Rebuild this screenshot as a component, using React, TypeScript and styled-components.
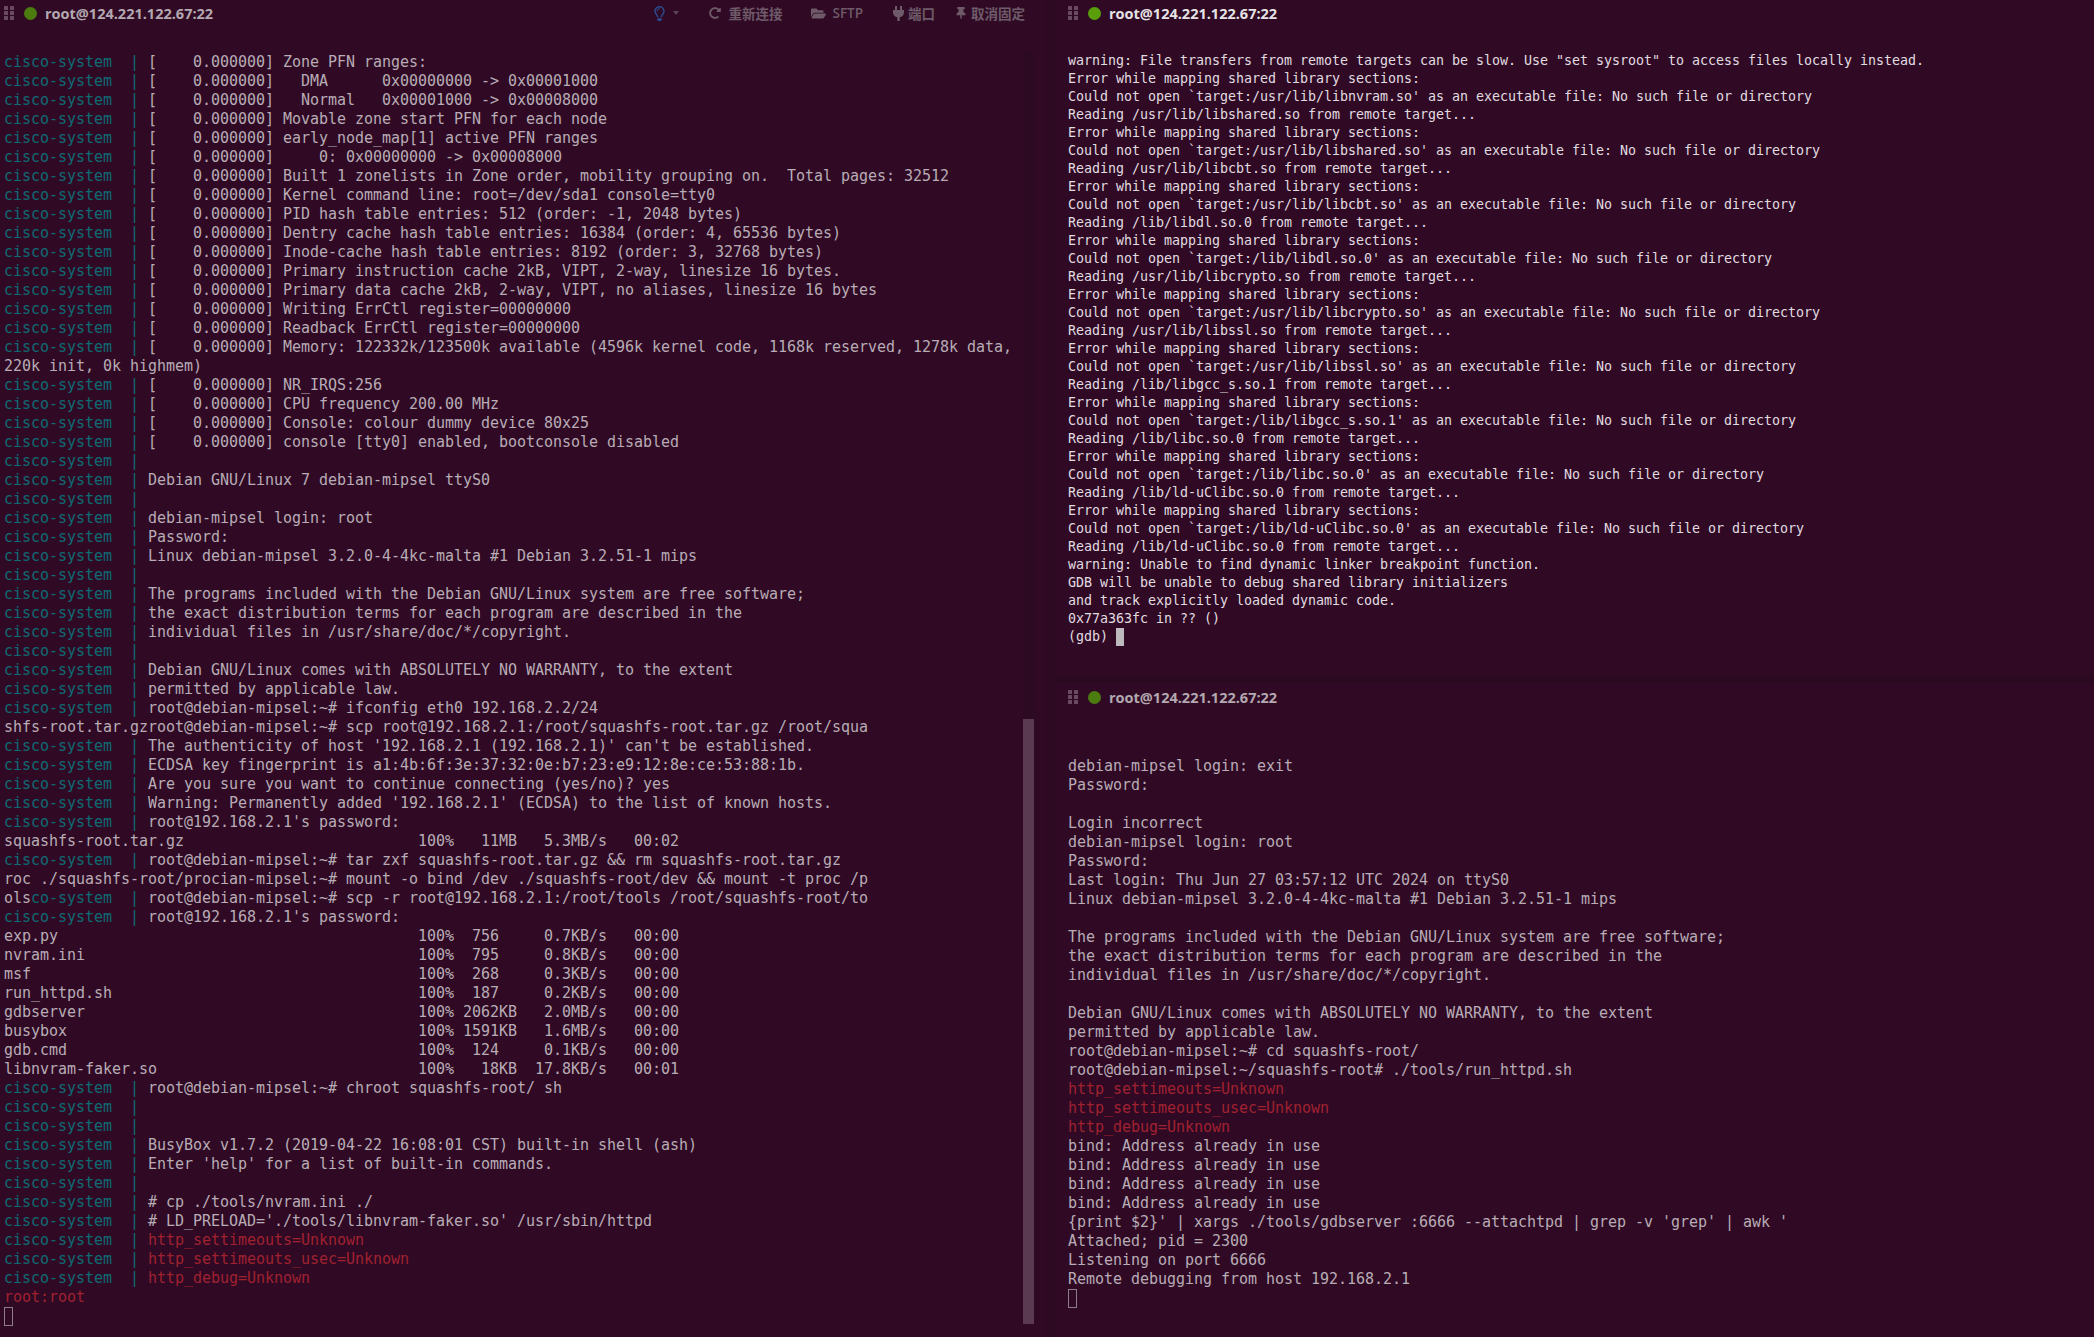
import React from "react";
import styled, { createGlobalStyle } from "styled-components";
import { FaRegLightbulb, FaRedoAlt, FaFolderOpen, FaThumbtack } from "react-icons/fa";

const Global = createGlobalStyle`
  html, body { margin: 0; padding: 0; height: 1337px; overflow: hidden; background: #300a24; }
  #root { width: 2094px; height: 1337px; overflow: hidden; }
`;

const Page = styled.div`
  display: flex;
  width: 2094px;
  height: 1337px;
  background: #300a24;
  overflow: hidden;
`;

const LeftPane = styled.section`
  position: relative;
  width: 1046px;
  height: 1337px;
  flex: none;
`;

const Gutter = styled.div`
  width: 10px;
  flex: none;
  background: #2d0a22;
`;

const RightColumn = styled.div`
  flex: 1;
  display: flex;
  flex-direction: column;
`;

const TopPane = styled.section`
  height: 673px;
  flex: none;
`;

const Seam = styled.div`
  height: 9px;
  flex: none;
  background: linear-gradient(#2e0a23, #2a0a1f);
`;

const BottomPane = styled.section`
  flex: 1;
`;

const Header = styled.header<{ $inset: number; $height: number }>`
  display: flex;
  align-items: center;
  height: ${(p) => p.$height}px;
  padding-left: ${(p) => p.$inset}px;
  padding-right: 21px;
`;

const Grip = styled.svg`
  width: 10px;
  height: 14px;
  flex: none;
  fill: #6a4a62;
`;

const Dot = styled.span<{ $active?: boolean }>`
  width: 13px;
  height: 13px;
  margin-left: 10px;
  border-radius: 50%;
  flex: none;
  background: ${(p) => (p.$active ? "#5a9e0c" : "#4c7c10")};
`;

const Title = styled.span<{ $active?: boolean }>`
  margin-left: 8px;
  font: 700 14.5px "Open Sans", "Noto Sans", sans-serif;
  color: ${(p) => (p.$active ? "#e6e3e6" : "#b3a8b0")};
`;

const Tools = styled.div`
  margin-left: auto;
  display: flex;
  align-items: center;
  font: 600 13.5px "Open Sans", "Noto Sans CJK SC", sans-serif;
  color: #6e5a69;
`;

const Tool = styled.span<{ $before: number; $gap: number }>`
  display: inline-flex;
  align-items: center;
  gap: ${(p) => p.$gap}px;
  margin-left: ${(p) => p.$before}px;
  white-space: nowrap;
`;

const BulbIcon = styled(FaRegLightbulb)`
  width: 11px;
  height: 15px;
  color: #2c4a8e;
`;

const Caret = styled.span`
  width: 0;
  height: 0;
  margin-left: 8px;
  border-left: 3px solid transparent;
  border-right: 3px solid transparent;
  border-top: 4px solid #5a4355;
`;

const Terminal = styled.div<{ $top: number; $left: number; $size: number; $line: number; $track: number; $bright?: boolean }>`
  padding: ${(p) => p.$top}px 0 0 ${(p) => p.$left}px;
  font-family: "DejaVu Sans Mono", "Liberation Mono", monospace;
  font-size: ${(p) => p.$size}px;
  line-height: ${(p) => p.$line}px;
  letter-spacing: ${(p) => p.$track}px;
  color: ${(p) => (p.$bright ? "#e0dce0" : "#b8acb6")};
  white-space: pre;
`;

const Row = styled.div<{ $line: number }>`
  height: ${(p) => p.$line}px;
`;

const Prefix = styled.span`
  color: #0e6b74;
`;

const Red = styled.span`
  color: #a02130;
`;

const Block = styled.span`
  display: inline-block;
  width: 8px;
  height: 18px;
  vertical-align: top;
  background: #bdbabd;
`;

const Hollow = styled.span`
  display: block;
  width: 9px;
  height: 19px;
  box-sizing: border-box;
  border: 1px solid #8c7d88;
`;

const ScrollTrack = styled.div`
  position: absolute;
  left: 1023px;
  top: 52px;
  bottom: 13px;
  width: 11px;
  background: #2c0a21;
`;

const ScrollThumb = styled.div`
  position: absolute;
  left: 0;
  right: 0;
  top: 667px;
  bottom: 0;
  background: #593a51;
`;

const leftLines = [
  "~[    0.000000] Zone PFN ranges:",
  "~[    0.000000]   DMA      0x00000000 -> 0x00001000",
  "~[    0.000000]   Normal   0x00001000 -> 0x00008000",
  "~[    0.000000] Movable zone start PFN for each node",
  "~[    0.000000] early_node_map[1] active PFN ranges",
  "~[    0.000000]     0: 0x00000000 -> 0x00008000",
  "~[    0.000000] Built 1 zonelists in Zone order, mobility grouping on.  Total pages: 32512",
  "~[    0.000000] Kernel command line: root=/dev/sda1 console=tty0",
  "~[    0.000000] PID hash table entries: 512 (order: -1, 2048 bytes)",
  "~[    0.000000] Dentry cache hash table entries: 16384 (order: 4, 65536 bytes)",
  "~[    0.000000] Inode-cache hash table entries: 8192 (order: 3, 32768 bytes)",
  "~[    0.000000] Primary instruction cache 2kB, VIPT, 2-way, linesize 16 bytes.",
  "~[    0.000000] Primary data cache 2kB, 2-way, VIPT, no aliases, linesize 16 bytes",
  "~[    0.000000] Writing ErrCtl register=00000000",
  "~[    0.000000] Readback ErrCtl register=00000000",
  "~[    0.000000] Memory: 122332k/123500k available (4596k kernel code, 1168k reserved, 1278k data,",
  "220k init, 0k highmem)",
  "~[    0.000000] NR_IRQS:256",
  "~[    0.000000] CPU frequency 200.00 MHz",
  "~[    0.000000] Console: colour dummy device 80x25",
  "~[    0.000000] console [tty0] enabled, bootconsole disabled",
  "~",
  "~Debian GNU/Linux 7 debian-mipsel ttyS0",
  "~",
  "~debian-mipsel login: root",
  "~Password:",
  "~Linux debian-mipsel 3.2.0-4-4kc-malta #1 Debian 3.2.51-1 mips",
  "~",
  "~The programs included with the Debian GNU/Linux system are free software;",
  "~the exact distribution terms for each program are described in the",
  "~individual files in /usr/share/doc/*/copyright.",
  "~",
  "~Debian GNU/Linux comes with ABSOLUTELY NO WARRANTY, to the extent",
  "~permitted by applicable law.",
  "~root@debian-mipsel:~# ifconfig eth0 192.168.2.2/24",
  "shfs-root.tar.gzroot@debian-mipsel:~# scp root@192.168.2.1:/root/squashfs-root.tar.gz /root/squa",
  "~The authenticity of host '192.168.2.1 (192.168.2.1)' can't be established.",
  "~ECDSA key fingerprint is a1:4b:6f:3e:37:32:0e:b7:23:e9:12:8e:ce:53:88:1b.",
  "~Are you sure you want to continue connecting (yes/no)? yes",
  "~Warning: Permanently added '192.168.2.1' (ECDSA) to the list of known hosts.",
  "~root@192.168.2.1's password:",
  "squashfs-root.tar.gz                          100%   11MB   5.3MB/s   00:02",
  "~root@debian-mipsel:~# tar zxf squashfs-root.tar.gz && rm squashfs-root.tar.gz",
  "roc ./squashfs-root/procian-mipsel:~# mount -o bind /dev ./squashfs-root/dev && mount -t proc /p",
  "^root@debian-mipsel:~# scp -r root@192.168.2.1:/root/tools /root/squashfs-root/to",
  "~root@192.168.2.1's password:",
  "exp.py                                        100%  756     0.7KB/s   00:00",
  "nvram.ini                                     100%  795     0.8KB/s   00:00",
  "msf                                           100%  268     0.3KB/s   00:00",
  "run_httpd.sh                                  100%  187     0.2KB/s   00:00",
  "gdbserver                                     100% 2062KB   2.0MB/s   00:00",
  "busybox                                       100% 1591KB   1.6MB/s   00:00",
  "gdb.cmd                                       100%  124     0.1KB/s   00:00",
  "libnvram-faker.so                             100%   18KB  17.8KB/s   00:01",
  "~root@debian-mipsel:~# chroot squashfs-root/ sh",
  "~",
  "~",
  "~BusyBox v1.7.2 (2019-04-22 16:08:01 CST) built-in shell (ash)",
  "~Enter 'help' for a list of built-in commands.",
  "~",
  "~# cp ./tools/nvram.ini ./",
  "~# LD_PRELOAD='./tools/libnvram-faker.so' /usr/sbin/httpd",
  "~!http_settimeouts=Unknown",
  "~!http_settimeouts_usec=Unknown",
  "~!http_debug=Unknown",
  "!root:root",
];

const topLines = [
  'warning: File transfers from remote targets can be slow. Use "set sysroot" to access files locally instead.',
  "Error while mapping shared library sections:",
  "Could not open `target:/usr/lib/libnvram.so' as an executable file: No such file or directory",
  "Reading /usr/lib/libshared.so from remote target...",
  "Error while mapping shared library sections:",
  "Could not open `target:/usr/lib/libshared.so' as an executable file: No such file or directory",
  "Reading /usr/lib/libcbt.so from remote target...",
  "Error while mapping shared library sections:",
  "Could not open `target:/usr/lib/libcbt.so' as an executable file: No such file or directory",
  "Reading /lib/libdl.so.0 from remote target...",
  "Error while mapping shared library sections:",
  "Could not open `target:/lib/libdl.so.0' as an executable file: No such file or directory",
  "Reading /usr/lib/libcrypto.so from remote target...",
  "Error while mapping shared library sections:",
  "Could not open `target:/usr/lib/libcrypto.so' as an executable file: No such file or directory",
  "Reading /usr/lib/libssl.so from remote target...",
  "Error while mapping shared library sections:",
  "Could not open `target:/usr/lib/libssl.so' as an executable file: No such file or directory",
  "Reading /lib/libgcc_s.so.1 from remote target...",
  "Error while mapping shared library sections:",
  "Could not open `target:/lib/libgcc_s.so.1' as an executable file: No such file or directory",
  "Reading /lib/libc.so.0 from remote target...",
  "Error while mapping shared library sections:",
  "Could not open `target:/lib/libc.so.0' as an executable file: No such file or directory",
  "Reading /lib/ld-uClibc.so.0 from remote target...",
  "Error while mapping shared library sections:",
  "Could not open `target:/lib/ld-uClibc.so.0' as an executable file: No such file or directory",
  "Reading /lib/ld-uClibc.so.0 from remote target...",
  "warning: Unable to find dynamic linker breakpoint function.",
  "GDB will be unable to debug shared library initializers",
  "and track explicitly loaded dynamic code.",
  "0x77a363fc in ?? ()",
];

const bottomLines = [
  "debian-mipsel login: exit",
  "Password:",
  "",
  "Login incorrect",
  "debian-mipsel login: root",
  "Password:",
  "Last login: Thu Jun 27 03:57:12 UTC 2024 on ttyS0",
  "Linux debian-mipsel 3.2.0-4-4kc-malta #1 Debian 3.2.51-1 mips",
  "",
  "The programs included with the Debian GNU/Linux system are free software;",
  "the exact distribution terms for each program are described in the",
  "individual files in /usr/share/doc/*/copyright.",
  "",
  "Debian GNU/Linux comes with ABSOLUTELY NO WARRANTY, to the extent",
  "permitted by applicable law.",
  "root@debian-mipsel:~# cd squashfs-root/",
  "root@debian-mipsel:~/squashfs-root# ./tools/run_httpd.sh",
  "!http_settimeouts=Unknown",
  "!http_settimeouts_usec=Unknown",
  "!http_debug=Unknown",
  "bind: Address already in use",
  "bind: Address already in use",
  "bind: Address already in use",
  "bind: Address already in use",
  "{print $2}' | xargs ./tools/gdbserver :6666 --attachtpd | grep -v 'grep' | awk '",
  "Attached; pid = 2300",
  "Listening on port 6666",
  "Remote debugging from host 192.168.2.1",
];

function Line({ text }: { text: string }) {
  if (text.startsWith("~")) {
    const rest = text.slice(1);
    return (
      <>
        <Prefix>cisco-system  | </Prefix>
        {rest.startsWith("!") ? <Red>{rest.slice(1)}</Red> : rest}
      </>
    );
  }
  if (text.startsWith("^")) {
    return (
      <>
        ols<Prefix>co-system  | </Prefix>
        {text.slice(1)}
      </>
    );
  }
  if (text.startsWith("!")) return <Red>{text.slice(1)}</Red>;
  return <>{text}</>;
}

function Rows({ lines, line }: { lines: string[]; line: number }) {
  return (
    <>
      {lines.map((text, i) => (
        <Row key={i} $line={line}>
          <Line text={text} />
        </Row>
      ))}
    </>
  );
}

function GripIcon() {
  return (
    <Grip viewBox="0 0 10 14">
      <rect x="0" y="0" width="4" height="4" rx="0.5" />
      <rect x="6" y="0" width="4" height="4" rx="0.5" />
      <rect x="0" y="5" width="4" height="4" rx="0.5" />
      <rect x="6" y="5" width="4" height="4" rx="0.5" />
      <rect x="0" y="10" width="4" height="4" rx="0.5" />
      <rect x="6" y="10" width="4" height="4" rx="0.5" />
    </Grip>
  );
}

function PlugIcon() {
  return (
    <svg width="13" height="15" viewBox="0 0 12 15" fill="currentColor">
      <rect x="2.5" y="0" width="2" height="4" />
      <rect x="7.5" y="0" width="2" height="4" />
      <path d="M0.5 4h11v2.5c0 2.6-2 4.5-4.3 4.8V15H4.8v-3.7C2.5 11 .5 9.1.5 6.5z" />
    </svg>
  );
}

export default function App() {
  return (
    <Page>
      <Global />
      <LeftPane>
        <Header $inset={4} $height={26}>
          <GripIcon />
          <Dot />
          <Title>root@124.221.122.67:22</Title>
          <Tools>
            <BulbIcon />
            <Caret />
            <Tool $before={30} $gap={7}>
              <FaRedoAlt size={12} />
              重新连接
            </Tool>
            <Tool $before={29} $gap={6}>
              <FaFolderOpen size={15} />
              SFTP
            </Tool>
            <Tool $before={29} $gap={3}>
              <PlugIcon />
              端口
            </Tool>
            <Tool $before={20} $gap={4}>
              <FaThumbtack size={12} />
              取消固定
            </Tool>
          </Tools>
        </Header>
        <Terminal $top={27} $left={4} $size={15} $line={19} $track={-0.03}>
          <Rows lines={leftLines} line={19} />
          <Hollow />
        </Terminal>
        <ScrollTrack>
          <ScrollThumb />
        </ScrollTrack>
      </LeftPane>
      <Gutter />
      <RightColumn>
        <TopPane>
          <Header $inset={12} $height={26}>
            <GripIcon />
            <Dot $active />
            <Title $active>root@124.221.122.67:22</Title>
          </Header>
          <Terminal $top={26} $left={12} $size={13.33} $line={18} $track={-0.025} $bright>
            <Rows lines={topLines} line={18} />
            <Row $line={18}>
              (gdb) <Block />
            </Row>
          </Terminal>
        </TopPane>
        <Seam />
        <BottomPane>
          <Header $inset={12} $height={30}>
            <GripIcon />
            <Dot />
            <Title>root@124.221.122.67:22</Title>
          </Header>
          <Terminal $top={45} $left={12} $size={15} $line={19} $track={-0.03}>
            <Rows lines={bottomLines} line={19} />
            <Hollow />
          </Terminal>
        </BottomPane>
      </RightColumn>
    </Page>
  );
}
